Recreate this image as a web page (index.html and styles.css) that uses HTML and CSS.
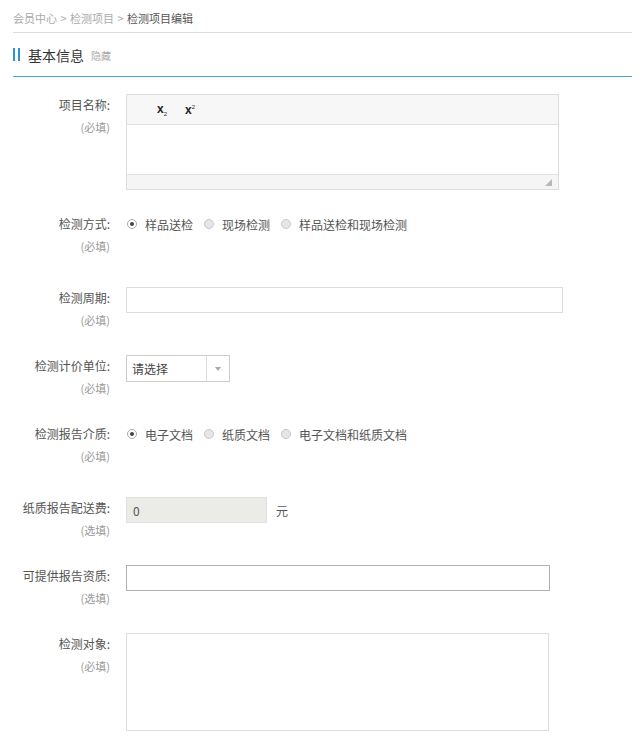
FILE: index.html
```html
<!DOCTYPE html>
<html lang="zh-CN">
<head>
  <meta charset="UTF-8">
  <title>检测项目编辑</title>
  <link rel="stylesheet" href="styles.css">
</head>
<body>
  <div class="page">
    <!-- Breadcrumb -->
    <div class="crumbs">
      <a>会员中心</a> <span class="sep">&gt;</span> <a>检测项目</a> <span class="sep">&gt;</span> <span class="current">检测项目编辑</span>
    </div>

    <!-- Section title -->
    <div class="section-head">
      <span class="bars"><i></i><i></i></span>
      <h2>基本信息</h2>
      <a class="toggle">隐藏</a>
    </div>

    <div class="form">
      <div class="row row-editor">
        <div class="label"><div>项目名称:</div><div class="hint">(必填)</div></div>
        <div class="editor">
          <div class="toolbar">
            <span class="tool">x<sub>2</sub></span>
            <span class="tool">x<sup>2</sup></span>
          </div>
          <div class="editor-body"></div>
          <div class="editor-foot"><span class="grip"></span></div>
        </div>
      </div>

      <div class="row row-radio">
        <div class="label"><div>检测方式:</div><div class="hint">(必填)</div></div>
        <div class="radios">
          <label class="radio"><span class="dot on"></span>样品送检</label>
          <label class="radio"><span class="dot"></span>现场检测</label>
          <label class="radio"><span class="dot"></span>样品送检和现场检测</label>
        </div>
      </div>

      <div class="row">
        <div class="label"><div>检测周期:</div><div class="hint">(必填)</div></div>
        <div class="field"><input class="text wide" type="text"></div>
      </div>

      <div class="row">
        <div class="label"><div>检测计价单位:</div><div class="hint">(必填)</div></div>
        <div class="field">
          <div class="select"><span class="select-text">请选择</span><span class="select-arrow"></span></div>
        </div>
      </div>

      <div class="row row-radio">
        <div class="label"><div>检测报告介质:</div><div class="hint">(必填)</div></div>
        <div class="radios">
          <label class="radio"><span class="dot on"></span>电子文档</label>
          <label class="radio"><span class="dot"></span>纸质文档</label>
          <label class="radio"><span class="dot"></span>电子文档和纸质文档</label>
        </div>
      </div>

      <div class="row">
        <div class="label"><div>纸质报告配送费:</div><div class="hint">(选填)</div></div>
        <div class="field">
          <input class="text fee" type="text" value="0" disabled>
          <span class="unit">元</span>
        </div>
      </div>

      <div class="row">
        <div class="label"><div>可提供报告资质:</div><div class="hint">(选填)</div></div>
        <div class="field"><input class="text qual" type="text"></div>
      </div>

      <div class="row">
        <div class="label"><div>检测对象:</div><div class="hint">(必填)</div></div>
        <div class="field"><textarea class="area"></textarea></div>
      </div>
    </div>
  </div>
</body>
</html>
```

FILE: styles.css
```css
body {
  margin: 0;
  font-family: "Noto Sans CJK SC", "Liberation Sans", sans-serif;
  font-size: 12px;
  color: #555;
  background: #fff;
}

.page {
  padding: 0 11px 0 13px;
}

/* Breadcrumb */
.crumbs {
  height: 32px;
  line-height: 36px;
  font-size: 11px;
  color: #aaa;
  border-bottom: 1px solid #ddd;
}

.crumbs .sep {
  margin: 0 1px;
}

.crumbs .current {
  color: #555;
}

/* Section title */
.section-head {
  display: flex;
  align-items: center;
  height: 43px;
  border-bottom: 1px solid #4aa3d6;
}

.bars {
  display: flex;
  gap: 3px;
  margin-right: 8px;
}

.bars i {
  display: block;
  width: 2px;
  height: 13px;
  background: #2b92d4;
}

.section-head h2 {
  margin: 0;
  font-size: 14px;
  font-weight: normal;
  color: #333;
}

.toggle {
  margin-left: 7px;
  margin-top: 2px;
  font-size: 10px;
  color: #aaa;
}

/* Form rows */
.form {
  padding-top: 17px;
}

.row {
  display: flex;
  margin-bottom: 24px;
}

.row-radio {
  padding-bottom: 6px;
}

.row-editor {
  margin-bottom: 23px;
}

.label {
  width: 97px;
  margin-right: 16px;
  text-align: right;
  line-height: 22px;
  color: #555;
  flex-shrink: 0;
}

.label .hint {
  font-size: 11px;
  color: #999;
}

.field {
  display: flex;
  align-items: center;
  align-self: flex-start;
}

/* Editor */
.editor {
  width: 431px;
  border: 1px solid #ddd;
}

.toolbar {
  height: 29px;
  background: #f7f7f7;
  border-bottom: 1px solid #e2e2e2;
  display: flex;
  align-items: center;
  padding-left: 30px;
  gap: 18px;
}

.tool {
  font-family: "Liberation Sans", sans-serif;
  font-weight: bold;
  font-size: 12px;
  color: #222;
}

.tool sub,
.tool sup {
  font-size: 6px;
  font-weight: normal;
}

.editor-body {
  height: 49px;
  background: #fff;
}

.editor-foot {
  position: relative;
  height: 14px;
  background: #f5f5f5;
  border-top: 1px solid #e2e2e2;
}

.grip {
  position: absolute;
  right: 6px;
  bottom: 3px;
  width: 0;
  height: 0;
  border-left: 7px solid transparent;
  border-bottom: 7px solid #b8b8b8;
}

/* Radios */
.radios {
  display: flex;
  align-items: center;
  height: 22px;
  padding-left: 1px;
}

.radio {
  display: flex;
  align-items: center;
  margin-right: 11px;
  color: #555;
}

.dot {
  box-sizing: border-box;
  width: 10px;
  height: 10px;
  border-radius: 50%;
  border: 1px solid #c8c8c8;
  background: #e6e6e6;
  margin-right: 8px;
  position: relative;
}

.dot.on {
  background: #fff;
  border-color: #aaa;
}

.dot.on::after {
  content: "";
  position: absolute;
  left: 2px;
  top: 2px;
  width: 4px;
  height: 4px;
  border-radius: 50%;
  background: #444;
}

/* Inputs */
.text {
  box-sizing: border-box;
  height: 26px;
  border: 1px solid #ddd;
  padding: 0 6px;
  font-family: inherit;
  font-size: 12px;
  color: #555;
  outline: none;
}

.wide {
  width: 437px;
}

.fee {
  width: 141px;
  background: #ebebe8;
  border-color: #e0e0dc;
}

.unit {
  margin-left: 9px;
  color: #555;
}

.qual {
  width: 424px;
  border-color: #b0b0b0;
}

.select {
  box-sizing: border-box;
  width: 104px;
  height: 27px;
  border: 1px solid #ccc;
  display: flex;
  align-items: center;
}

.select-text {
  flex: 1;
  padding-left: 5px;
  color: #444;
}

.select-arrow {
  width: 22px;
  height: 25px;
  border-left: 1px solid #ddd;
  position: relative;
}

.select-arrow::after {
  content: "";
  position: absolute;
  left: 8px;
  top: 11px;
  border-left: 3px solid transparent;
  border-right: 3px solid transparent;
  border-top: 4px solid #aaa;
}

.area {
  box-sizing: border-box;
  width: 423px;
  height: 98px;
  border: 1px solid #ddd;
  resize: none;
  outline: none;
}
```
